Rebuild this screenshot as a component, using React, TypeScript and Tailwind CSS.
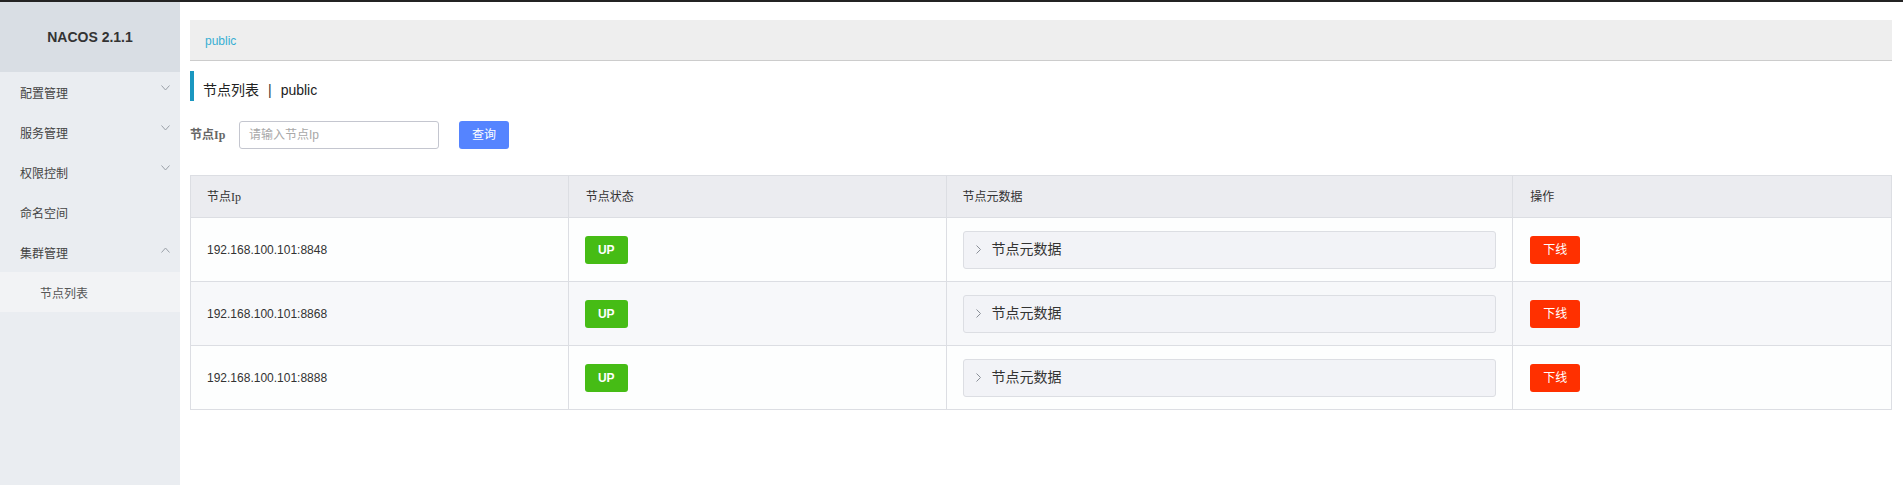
import React from "react";

const FONT = '"Liberation Sans", "Noto Sans CJK SC", sans-serif';
const SERIF_MIX = '"Liberation Serif", "Noto Sans CJK SC", serif';

function ChevronDown({ up = false }: { up?: boolean }) {
  return (
    <svg width="9" height="6" viewBox="0 0 9 6" className="block">
      {up ? (
        <polyline points="0.5,5.5 4.5,1 8.5,5.5" fill="none" stroke="#9aa0a8" strokeWidth="1" />
      ) : (
        <polyline points="0.5,0.5 4.5,5 8.5,0.5" fill="none" stroke="#9aa0a8" strokeWidth="1" />
      )}
    </svg>
  );
}

function ChevronRight() {
  return (
    <svg width="5" height="9" viewBox="0 0 5 9" className="block">
      <polyline points="0.5,0.5 4.5,4.5 0.5,8.5" fill="none" stroke="#8a8f97" strokeWidth="1" />
    </svg>
  );
}

const menus = [
  { label: "配置管理", arrow: "down" },
  { label: "服务管理", arrow: "down" },
  { label: "权限控制", arrow: "down" },
  { label: "命名空间", arrow: "none" },
  { label: "集群管理", arrow: "up" },
];

const rows = ["192.168.100.101:8848", "192.168.100.101:8868", "192.168.100.101:8888"];

export default function App() {
  return (
    <div className="w-[1903px] h-[485px] bg-white overflow-hidden flex flex-col" style={{ fontFamily: FONT }}>
      <div className="h-[2px] bg-[#232323] shrink-0" />
      <div className="flex flex-1 min-h-0">
        {/* Sidebar */}
        <aside className="w-[180px] shrink-0 bg-[#eaedf1] flex flex-col">
          <div className="h-[70px] bg-[#d9dee4] flex items-center justify-center">
            <span className="text-[14px] font-bold text-[#333]" style={{ fontFamily: '"Liberation Sans", sans-serif' }}>
              NACOS 2.1.1
            </span>
          </div>
          {menus.map((m) => (
            <div key={m.label} className="h-[40px] flex items-center justify-between pl-[20px] pr-[10px]">
              <span className="text-[12px] text-[#444] pt-[4px]">{m.label}</span>
              {m.arrow === "down" && (
                <span className="-translate-y-[4px]">
                  <ChevronDown />
                </span>
              )}
              {m.arrow === "up" && (
                <span className="-translate-y-[2px]">
                  <ChevronDown up />
                </span>
              )}
            </div>
          ))}
          <div className="h-[40px] bg-[#f2f3f5] flex items-center pl-[40px]">
            <span className="text-[12px] text-[#555] pt-[4px]">节点列表</span>
          </div>
        </aside>

        {/* Main */}
        <main className="flex-1 min-w-0 pl-[10px] pr-[11px] pt-[18px]">
          <div className="h-[41px] bg-[#eeeeee] border-b border-[#cccccc] flex items-center pl-[15px]">
            <span className="text-[12px] text-[#38aed3] pt-[2px]">public</span>
          </div>

          <div className="mt-[10px] h-[30px] border-l-[4px] border-[#1a97c0] flex items-center pl-[9px] pt-[8px]">
            <span className="text-[14px] text-[#222]">节点列表</span>
            <span className="text-[14px] text-[#333] px-[9px]">|</span>
            <span className="text-[14px] text-[#222]">public</span>
          </div>

          <div className="mt-[20px] flex items-center h-[28px]">
            <span className="text-[12px] font-bold text-[#666] w-[49px]" style={{ fontFamily: SERIF_MIX }}>
              节点Ip
            </span>
            <div className="w-[200px] h-[28px] border border-[#c4c6cf] rounded-[3px] flex items-center pl-[9px]">
              <span className="text-[12px] text-[#a8a8a8]">请输入节点Ip</span>
            </div>
            <button className="ml-[20px] w-[50px] h-[28px] bg-[#5584ff] rounded-[3px] text-white text-[12px] flex items-center justify-center">
              查询
            </button>
          </div>

          <div className="mt-[26px] border border-[#dcdee3]">
            <div className="grid grid-cols-[2fr_2fr_3fr_2fr] bg-[#ebecf0] h-[41px] text-[12px] text-[#333]">
              <div className="flex items-center pl-[16px] border-r border-[#dcdee3]" style={{ fontFamily: SERIF_MIX }}>
                节点Ip
              </div>
              <div className="flex items-center pl-[17px] border-r border-[#dcdee3]">节点状态</div>
              <div className="flex items-center pl-[16px] border-r border-[#dcdee3]">节点元数据</div>
              <div className="flex items-center pl-[17px]">操作</div>
            </div>
            {rows.map((ip, i) => (
              <div
                key={ip}
                className={`grid grid-cols-[2fr_2fr_3fr_2fr] h-[64px] border-t border-[#dcdee3] text-[12px] text-[#333] ${
                  i === 1 ? "bg-[#f7f8fa]" : "bg-[#fdfefe]"
                }`}
              >
                <div className="flex items-center pl-[16px] border-r border-[#dcdee3]">{ip}</div>
                <div className="flex items-center pl-[16px] border-r border-[#dcdee3]">
                  <span className="w-[43px] h-[28px] rounded-[3px] bg-[#46bc15] text-white text-[12px] font-bold flex items-center justify-center">
                    UP
                  </span>
                </div>
                <div className="flex items-center px-[16px] border-r border-[#dcdee3]">
                  <div className="w-full h-[38px] rounded-[3px] border border-[#dcdee3] bg-[#f2f3f7] flex items-center pl-[12px]">
                    <ChevronRight />
                    <span className="ml-[11px] text-[14px] text-[#333]">节点元数据</span>
                  </div>
                </div>
                <div className="flex items-center pl-[17px]">
                  <span className="w-[50px] h-[28px] rounded-[3px] bg-[#ff3000] text-white text-[12px] flex items-center justify-center">
                    下线
                  </span>
                </div>
              </div>
            ))}
          </div>
        </main>
      </div>
    </div>
  );
}
